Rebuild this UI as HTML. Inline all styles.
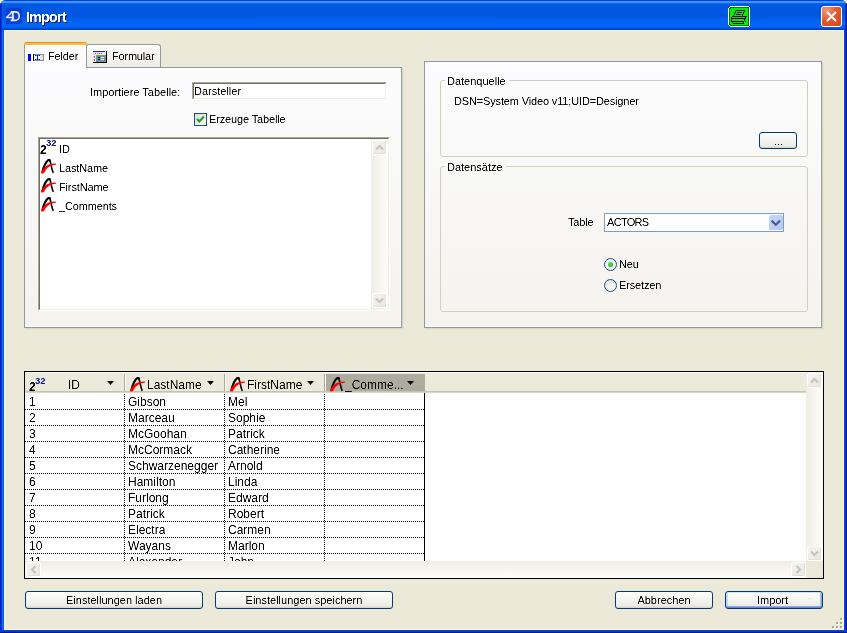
<!DOCTYPE html>
<html><head><meta charset="utf-8">
<style>
*{margin:0;padding:0;box-sizing:border-box}
html,body{width:847px;height:633px;overflow:hidden;background:#efebd6}
body{position:relative;font-family:"Liberation Sans",sans-serif;font-size:11px;color:#000}
.a{position:absolute}
.cr{filter:url(#crisp)}
.t{filter:url(#crisp);position:absolute;white-space:nowrap;line-height:13px;font-size:11px;letter-spacing:-0.15px}
#win{position:absolute;left:0;top:0;width:847px;height:633px;border-radius:6px 6px 0 0;overflow:hidden;background:#0058e6}
#title{position:absolute;left:0;top:0;width:847px;height:30px;
 background:linear-gradient(to bottom,#0a3cd8 0px,#0a3cd8 1px,#3d95ff 1px,#3d95ff 3px,#0a6cf2 3px,#0060ea 4px,#0058e2 5px,#0055e0 16px,#005ee8 18px,#0064f2 21px,#0066f6 27px,#0056dc 28px,#0048d0 29px,#0038c0 30px)}
#client{position:absolute;left:4px;top:30px;width:840px;height:600px;background:#ece9d8;border-left:1px solid #fcf6da;border-top:1px solid #fcf6da;border-right:1px solid #fcf6da;border-bottom:1px solid #fcf6da}
.pane{position:absolute;border:1px solid #919b9c;background:linear-gradient(to bottom,#fcfcfe,#f4f3ee);box-shadow:inset -1px -1px 0 #fff,1px 1px 0 #dcd8c6,2px 2px 0 #e5e2d0}
.grp{position:absolute;border:1px solid #d0d0bf;border-radius:3px}
.glbl{position:absolute;white-space:nowrap;line-height:13px;padding:0 3px 0 2px;letter-spacing:0}
.btn{position:absolute;border:1px solid #003c74;border-radius:3px;background:linear-gradient(to bottom,#ffffff 0%,#f6f6f3 40%,#ecebe6 85%,#d6d0c5 100%);text-align:center;line-height:16px;letter-spacing:0px}
.sb{position:absolute;background:#f3f2ec}
.sbb{position:absolute;width:15px;height:15px;border:1px solid #fff;border-radius:2px;background:linear-gradient(135deg,#f4f3ee,#e8e7df);box-shadow:inset -1px -1px 0 #e2e1d8}
.g{filter:url(#crisp);position:absolute;white-space:nowrap;font-size:12px;line-height:16px}
.hd{position:absolute;left:25px;width:400px;height:1px;background-image:linear-gradient(to right,#000 50%,transparent 50%);background-size:2px 1px}
.vd{position:absolute;top:394px;width:1px;height:167px;background-image:linear-gradient(to bottom,#000 50%,transparent 50%);background-size:1px 2px}
</style></head><body>
<svg width="0" height="0" style="position:absolute"><filter id="crisp" x="0" y="0" width="100%" height="100%"><feComponentTransfer><feFuncA type="linear" slope="1.7" intercept="-0.35"/></feComponentTransfer></filter></svg>
<div id="win">
 <div id="title"></div>
 <!-- frame -->
 <div class="a" style="left:0;top:3px;width:1px;height:630px;background:#0019cf"></div>
 <div class="a" style="left:1px;top:3px;width:1px;height:630px;background:#0040d8"></div>
 <div class="a" style="left:2px;top:30px;width:1px;height:603px;background:#166aee"></div>
 <div class="a" style="left:3px;top:30px;width:1px;height:603px;background:#0058e0"></div>
 <div class="a" style="left:844px;top:30px;width:1px;height:603px;background:#0044ec"></div>
 <div class="a" style="left:845px;top:4px;width:1px;height:629px;background:#0036d0"></div>
 <div class="a" style="left:846px;top:3px;width:1px;height:630px;background:#001a90"></div>
 <div class="a" style="left:0;top:630px;width:847px;height:1px;background:#0044ec"></div>
 <div class="a" style="left:0;top:631px;width:847px;height:1px;background:#0036d0"></div>
 <div class="a" style="left:0;top:632px;width:847px;height:1px;background:#001a90"></div>
 <div id="client"></div>
 <!-- title content -->
 <div class="a" style="left:6px;top:8px;width:16px;height:16px;background:#0a3fd6"></div>
 <svg class="a" style="left:6px;top:8px" width="16" height="16" viewBox="0 0 16 16">
  <path d="M0.6 9.6 L6.4 3.6" stroke="#e6ebfb" stroke-width="1.4" fill="none"/>
  <path d="M0.2 9.4 L8 9.4" stroke="#e6ebfb" stroke-width="1.5" fill="none"/>
  <path d="M6.8 3.5 L6.8 12.6" stroke="#e6ebfb" stroke-width="1.9" fill="none"/>
  <path d="M4.8 3.9 L9 3.9 C14.6 3.9 14.6 12.4 9 12.4 L4.6 12.4" stroke="#e6ebfb" stroke-width="1.6" fill="none"/>
 </svg>
 <div class="a" style="left:27px;top:10px;font-weight:bold;font-size:14px;line-height:16px;letter-spacing:-0.6px;color:#0a1a60;white-space:nowrap;filter:url(#crisp)">Import</div>
 <div class="a" style="left:26px;top:9px;font-weight:bold;font-size:14px;line-height:16px;letter-spacing:-0.6px;color:#fff;white-space:nowrap;filter:url(#crisp)">Import</div>
 <!-- printer button -->
 <svg class="a" style="left:728px;top:6px" width="22" height="21" viewBox="0 0 22 21" shape-rendering="crispEdges">
  <path d="M2 0 H20 L22 2 V19 L20 21 H2 L0 19 V2 Z" fill="#fff"/>
  <path d="M2 1 H20 L21 2 V19 L20 20 H2 L1 19 V2 Z" fill="#0a7a0a"/>
  <path d="M3 2 H19 L20 3 V18 L19 19 H3 L2 18 V3 Z" fill="#00f000"/>
  <g fill="#000"><rect x="8" y="4" width="9" height="1"/><rect x="7" y="5" width="1" height="1"/><rect x="16" y="5" width="1" height="1"/><rect x="7" y="6" width="1" height="1"/><rect x="9" y="6" width="5" height="1"/><rect x="15" y="6" width="1" height="1"/><rect x="6" y="7" width="1" height="1"/><rect x="15" y="7" width="1" height="1"/><rect x="6" y="8" width="1" height="1"/><rect x="8" y="8" width="5" height="1"/><rect x="14" y="8" width="1" height="1"/><rect x="5" y="9" width="1" height="1"/><rect x="14" y="9" width="1" height="1"/><rect x="4" y="10" width="15" height="1"/><rect x="3" y="11" width="1" height="1"/><rect x="17" y="11" width="1" height="1"/><rect x="3" y="12" width="14" height="1"/><rect x="17" y="12" width="1" height="1"/><rect x="3" y="13" width="1" height="1"/><rect x="16" y="13" width="1" height="1"/><rect x="3" y="14" width="1" height="1"/><rect x="16" y="14" width="1" height="1"/><rect x="3" y="15" width="13" height="1"/><rect x="17" y="15" width="1" height="1"/><rect x="4" y="16" width="1" height="1"/><rect x="15" y="16" width="1" height="1"/><rect x="5" y="17" width="11" height="1"/></g>
 </svg>
 <!-- close button -->
 <div class="a" style="left:821px;top:6px;width:21px;height:21px;border:1px solid #fff;border-radius:3px;background:radial-gradient(circle at 25% 20%,#f39a7e 0%,#e45a32 45%,#d4401a 100%)"></div>
 <svg class="a" style="left:821px;top:6px" width="21" height="21" viewBox="0 0 21 21">
  <path d="M6 6 L15 15 M15 6 L6 15" stroke="#fff" stroke-width="1.9" fill="none"/>
 </svg>

 <!-- ================= TABS ================= -->
 <div class="pane" style="left:24px;top:67px;width:378px;height:261px"></div>
 <!-- formular tab -->
 <div class="a" style="left:86px;top:44px;width:75px;height:23px;border:1px solid #919b9c;border-bottom:none;border-radius:3px 3px 0 0;background:linear-gradient(to bottom,#fefefe,#f4f3ee 60%,#ecebe6)"></div>
 <!-- felder tab (selected) -->
 <div class="a" style="left:24px;top:42px;width:63px;height:26px;border-left:1px solid #919b9c;border-right:1px solid #919b9c;border-radius:3px 3px 0 0;background:#fcfcfe"></div>
 <div class="a" style="left:24px;top:42px;width:63px;height:3px;background:linear-gradient(to bottom,#e68b2c 0,#e68b2c 1px,#ffc73c 1px,#f9b53a 3px);border-radius:3px 3px 0 0"></div>
 <!-- felder icon -->
 <div class="a" style="left:28px;top:54px;width:3px;height:7px;background:#0000ff"></div>
 <svg class="a" style="left:33px;top:54px" width="11" height="7" viewBox="0 0 11 7" shape-rendering="crispEdges">
  <rect x="0" y="0" width="11" height="7" fill="#8a8a8a"/>
  <rect x="1" y="1" width="9" height="5" fill="#e6e6e6"/>
  <rect x="1" y="1" width="6" height="5" fill="#fffff0"/>
  <rect x="0" y="0" width="1" height="7" fill="#000"/>
  <rect x="2" y="1" width="5" height="1" fill="#0010ff"/>
  <rect x="2" y="5" width="5" height="1" fill="#0010ff"/>
  <rect x="4" y="1" width="1" height="5" fill="#0010ff"/>
  <rect x="3" y="1" width="1" height="1" fill="#40a0ff"/><rect x="5" y="1" width="1" height="1" fill="#40a0ff"/>
  <rect x="3" y="5" width="1" height="1" fill="#40a0ff"/><rect x="5" y="5" width="1" height="1" fill="#40a0ff"/>
 </svg>
 <div class="t" style="left:48px;top:50px">Felder</div>
 <!-- formular icon -->
 <svg class="a" style="left:93px;top:51px" width="14" height="12" viewBox="0 0 14 12" shape-rendering="crispEdges">
  <rect x="0" y="0" width="13" height="11" fill="#e4e4fa"/>
  <rect x="0" y="0" width="12" height="1" fill="#1a1ae0"/>
  <rect x="13" y="0" width="1" height="12" fill="#000"/>
  <rect x="0" y="11" width="14" height="1" fill="#000"/>
  <rect x="2" y="2" width="1" height="1" fill="#707070"/><rect x="4" y="2" width="1" height="1" fill="#707070"/><rect x="6" y="2" width="1" height="1" fill="#707070"/><rect x="8" y="2" width="1" height="1" fill="#707070"/>
  <rect x="3" y="4" width="10" height="7" fill="#8c8c8c"/>
  <rect x="4" y="5" width="8" height="5" fill="#5c9c98"/>
  <rect x="5" y="6" width="2" height="1" fill="#000"/><rect x="5" y="8" width="2" height="1" fill="#000"/>
  <rect x="8" y="6" width="3" height="1" fill="#fff"/><rect x="8" y="8" width="3" height="1" fill="#fff"/>
  <rect x="1" y="5" width="1" height="2" fill="#e03060"/>
  <rect x="1" y="8" width="1" height="2" fill="#b07800"/>
 </svg>
 <div class="t" style="left:112px;top:50px;letter-spacing:-0.2px">Formular</div>

 <!-- left pane content -->
 <div class="t" style="left:90px;top:86px;letter-spacing:0">Importiere Tabelle:</div>
 <div class="a" style="left:192px;top:82px;width:194px;height:17px;background:#fff;border-top:2px solid #716f64;border-left:2px solid #716f64;border-right:1px solid #f1efe2;border-bottom:1px solid #f1efe2;box-shadow:-0px 0 0 #aca899"></div>
 <div class="a" style="left:192px;top:82px;width:193px;height:1px;background:#aca899"></div>
 <div class="a" style="left:192px;top:82px;width:1px;height:16px;background:#aca899"></div>
 <div class="t" style="left:194px;top:85px;letter-spacing:0">Darsteller</div>
 <!-- checkbox -->
 <div class="a" style="left:194px;top:113px;width:13px;height:13px;border:1px solid #1c5180;background:linear-gradient(135deg,#dcdcd7,#ffffff)"></div>
 <svg class="a" style="left:194px;top:113px" width="13" height="13" viewBox="0 0 13 13">
  <path d="M3 6 L5.3 8.5 L10 3.5" stroke="#21a121" stroke-width="2.2" fill="none"/>
 </svg>
 <div class="t" style="left:209px;top:113px">Erzeuge Tabelle</div>

 <!-- listbox -->
 <div class="a" style="left:38px;top:137px;width:352px;height:174px;background:#fff;border-top:1px solid #aca899;border-left:1px solid #aca899;border-right:1px solid #fff;border-bottom:1px solid #fff"></div>
 <div class="a" style="left:39px;top:138px;width:350px;height:172px;border-top:1px solid #716f64;border-left:1px solid #716f64;border-right:1px solid #f1efe2;border-bottom:1px solid #f1efe2"></div>
 <div class="sb" style="left:371px;top:139px;width:17px;height:170px;background:linear-gradient(to right,#eeede5,#fdfdf9)"></div>

 <!-- listbox rows -->
 <svg width="0" height="0" style="position:absolute"><defs>
  <symbol id="aic" viewBox="0 0 15 15">
   <path d="M1.2 13.8 C2.2 9.5 4.2 3.5 7.2 1.2 C8.2 0.5 8.8 1 9.2 2" stroke="#000" stroke-width="2.1" fill="none"/>
   <path d="M8.9 1.6 C10 4.5 10.6 10.5 12.3 13.8" stroke="#000" stroke-width="1.6" fill="none"/>
   <path d="M0 13.6 C1.5 10 4.5 6.5 8.5 5.3 C10.5 4.7 12.5 4.5 14.9 4.5 L14.9 5.8 C12.5 6 10.5 6.5 9 7.2 C6 8.8 4 11.5 3 14.3 L0.2 14.5 Z" fill="#ff0000"/>
  </symbol>
  <symbol id="chu" viewBox="0 0 15 15"><path d="M4 9.5 L7.5 6 L11 9.5" stroke="#c3c3b9" stroke-width="2" fill="none"/></symbol>
  <symbol id="chd" viewBox="0 0 15 15"><path d="M4 5.5 L7.5 9 L11 5.5" stroke="#c3c3b9" stroke-width="2" fill="none"/></symbol>
  <symbol id="chl" viewBox="0 0 15 15"><path d="M9.5 4 L6 7.5 L9.5 11" stroke="#c3c3b9" stroke-width="2" fill="none"/></symbol>
  <symbol id="chr" viewBox="0 0 15 15"><path d="M5.5 4 L9 7.5 L5.5 11" stroke="#c3c3b9" stroke-width="2" fill="none"/></symbol>
 </defs></svg>
 <div class="a" style="left:40px;top:144px;font-weight:bold;font-size:12px;line-height:12px;filter:url(#crisp)">2</div>
 <div class="a" style="left:46px;top:138px;font-weight:bold;font-size:9.5px;line-height:9px;color:#1e1ea0;filter:url(#crisp)">32</div>
 <div class="t" style="left:59px;top:143px">ID</div>
 <svg class="a" style="left:41px;top:159px" width="15" height="15"><use href="#aic"/></svg>
 <div class="t" style="left:59px;top:162px">LastName</div>
 <svg class="a" style="left:41px;top:178px" width="15" height="15"><use href="#aic"/></svg>
 <div class="t" style="left:59px;top:181px">FirstName</div>
 <svg class="a" style="left:41px;top:197px" width="15" height="15"><use href="#aic"/></svg>
 <div class="t" style="left:59px;top:200px">_Comments</div>
 <div class="sbb" style="left:372px;top:140px"></div>
 <svg class="a" style="left:372px;top:140px" width="15" height="15"><use href="#chu"/></svg>
 <div class="sbb" style="left:372px;top:293px"></div>
 <svg class="a" style="left:372px;top:293px" width="15" height="15"><use href="#chd"/></svg>

 <!-- ================= RIGHT PANE ================= -->
 <div class="pane" style="left:424px;top:61px;width:398px;height:267px"></div>
 <div class="grp" style="left:440px;top:80px;width:368px;height:77px"></div>
 <div class="glbl" style="left:445px;top:75px;background:#fbfbfc"><span class="cr">Datenquelle</span></div>
 <div class="t" style="left:454px;top:95px">DSN=System Video v11;UID=Designer</div>
 <div class="btn" style="left:759px;top:132px;width:38px;height:17px"></div>
 <div class="a" style="left:775px;top:144px;width:1px;height:1px;background:#000;box-shadow:3px 0 0 #000,6px 0 0 #000"></div>
 <div class="grp" style="left:440px;top:166px;width:368px;height:146px"></div>
 <div class="glbl" style="left:445px;top:161px;background:#f8f8f6"><span class="cr">Datens&auml;tze</span></div>
 <div class="t" style="left:568px;top:216px">Table</div>
 <div class="a" style="left:604px;top:213px;width:180px;height:19px;border:1px solid #7f9db9;background:#fff"></div>
 <div class="t" style="left:607px;top:216px;letter-spacing:-0.7px">ACTORS</div>
 <div class="a" style="left:769px;top:215px;width:14px;height:15px;border-radius:2px;background:linear-gradient(135deg,#c6d6fc,#b3c8f5)"></div>
 <svg class="a" style="left:769px;top:215px" width="14" height="15" viewBox="0 0 14 15"><path d="M2.6 5.6 L6.8 9.8 L11 5.6" stroke="#4d6185" stroke-width="2.2" fill="none"/></svg>
 <!-- radios -->
 <div class="a" style="left:604px;top:258px;width:13px;height:13px;border-radius:50%;border:1px solid #1c5180;background:radial-gradient(circle at 40% 40%,#fff,#e6e6df)"></div>
 <div class="a" style="left:608px;top:262px;width:5px;height:5px;border-radius:50%;background:radial-gradient(circle at 40% 40%,#66dd66,#18a018)"></div>
 <div class="t" style="left:619px;top:258px">Neu</div>
 <div class="a" style="left:604px;top:279px;width:13px;height:13px;border-radius:50%;border:1px solid #1c5180;background:radial-gradient(circle at 70% 70%,#fff,#dcdcd5)"></div>
 <div class="t" style="left:619px;top:279px">Ersetzen</div>

 <!-- ================= GRID ================= -->
 <div class="a" style="left:24px;top:371px;width:800px;height:208px;border:1px solid #000;background:#fff"></div>
 <div class="a" style="left:25px;top:372px;width:798px;height:1px;background:#fff"></div>
 <div class="a" style="left:25px;top:373px;width:781px;height:18px;background:#ebeadb"></div>
 <div class="a" style="left:25px;top:391px;width:781px;height:1px;background:#c5c2b2"></div>
 <div class="a" style="left:25px;top:392px;width:781px;height:1px;background:#d8d5c8"></div>
 <div class="a" style="left:326px;top:374px;width:99px;height:17px;background:#aeac9e"></div>
 <div class="a" style="left:124px;top:374px;width:1px;height:17px;background:#aca899"></div>
 <div class="a" style="left:125px;top:374px;width:1px;height:17px;background:#fff"></div>
 <div class="a" style="left:224px;top:374px;width:1px;height:17px;background:#aca899"></div>
 <div class="a" style="left:225px;top:374px;width:1px;height:17px;background:#fff"></div>
 <div class="a" style="left:324px;top:374px;width:1px;height:17px;background:#aca899"></div>
 <div class="a" style="left:325px;top:374px;width:1px;height:17px;background:#fff"></div>
 <!-- header content -->
 <div class="a" style="left:29px;top:381px;font-weight:bold;font-size:12px;line-height:12px;filter:url(#crisp)">2</div>
 <div class="a" style="left:35px;top:376px;font-weight:bold;font-size:9.5px;line-height:9px;color:#1e1ea0;filter:url(#crisp)">32</div>
 <div class="g" style="left:68px;top:377px">ID</div>
 <svg class="a" style="left:130px;top:377px" width="15" height="15"><use href="#aic"/></svg>
 <div class="g" style="left:147px;top:377px">LastName</div>
 <svg class="a" style="left:230px;top:377px" width="15" height="15"><use href="#aic"/></svg>
 <div class="g" style="left:247px;top:377px">FirstName</div>
 <svg class="a" style="left:330px;top:377px" width="15" height="15"><use href="#aic"/></svg>
 <div class="g" style="left:345px;top:377px">_Comme...</div>
 <svg class="a" style="left:107px;top:381px" width="7" height="4"><path d="M0 0 H7 L3.5 4 Z" fill="#000"/></svg>
 <svg class="a" style="left:207px;top:381px" width="7" height="4"><path d="M0 0 H7 L3.5 4 Z" fill="#000"/></svg>
 <svg class="a" style="left:307px;top:381px" width="7" height="4"><path d="M0 0 H7 L3.5 4 Z" fill="#000"/></svg>
 <svg class="a" style="left:407px;top:381px" width="7" height="4"><path d="M0 0 H7 L3.5 4 Z" fill="#000"/></svg>
 <!-- rows -->
 <div class="a" style="left:25px;top:393px;width:781px;height:168px;overflow:hidden">
  <div style="position:absolute;left:-25px;top:-393px;width:847px;height:633px">
<div class="g" style="left:29px;top:394px">1</div><div class="g" style="left:128px;top:394px">Gibson</div><div class="g" style="left:228px;top:394px">Mel</div>
<div class="hd" style="top:409px"></div>
<div class="g" style="left:29px;top:410px">2</div><div class="g" style="left:128px;top:410px">Marceau</div><div class="g" style="left:228px;top:410px">Sophie</div>
<div class="hd" style="top:425px"></div>
<div class="g" style="left:29px;top:426px">3</div><div class="g" style="left:128px;top:426px">McGoohan</div><div class="g" style="left:228px;top:426px">Patrick</div>
<div class="hd" style="top:441px"></div>
<div class="g" style="left:29px;top:442px">4</div><div class="g" style="left:128px;top:442px">McCormack</div><div class="g" style="left:228px;top:442px">Catherine</div>
<div class="hd" style="top:457px"></div>
<div class="g" style="left:29px;top:458px">5</div><div class="g" style="left:128px;top:458px">Schwarzenegger</div><div class="g" style="left:228px;top:458px">Arnold</div>
<div class="hd" style="top:473px"></div>
<div class="g" style="left:29px;top:474px">6</div><div class="g" style="left:128px;top:474px">Hamilton</div><div class="g" style="left:228px;top:474px">Linda</div>
<div class="hd" style="top:489px"></div>
<div class="g" style="left:29px;top:490px">7</div><div class="g" style="left:128px;top:490px">Furlong</div><div class="g" style="left:228px;top:490px">Edward</div>
<div class="hd" style="top:505px"></div>
<div class="g" style="left:29px;top:506px">8</div><div class="g" style="left:128px;top:506px">Patrick</div><div class="g" style="left:228px;top:506px">Robert</div>
<div class="hd" style="top:521px"></div>
<div class="g" style="left:29px;top:522px">9</div><div class="g" style="left:128px;top:522px">Electra</div><div class="g" style="left:228px;top:522px">Carmen</div>
<div class="hd" style="top:537px"></div>
<div class="g" style="left:29px;top:538px">10</div><div class="g" style="left:128px;top:538px">Wayans</div><div class="g" style="left:228px;top:538px">Marlon</div>
<div class="hd" style="top:553px"></div>
<div class="g" style="left:29px;top:554px">11</div><div class="g" style="left:128px;top:554px">Alexander</div><div class="g" style="left:228px;top:554px">John</div>
  <div class="vd" style="left:124px"></div>
  <div class="vd" style="left:224px"></div>
  <div class="vd" style="left:324px"></div>
  <div class="a" style="left:424px;top:393px;width:1px;height:168px;background:#000"></div>
  </div>
 </div>
 <!-- grid scrollbars -->
 <div class="sb" style="left:806px;top:372px;width:17px;height:189px;background:linear-gradient(to right,#eeede5,#fefefa)"></div>
 <div class="sbb" style="left:807px;top:373px"></div>
 <svg class="a" style="left:807px;top:373px" width="15" height="15"><use href="#chu"/></svg>
 <div class="sbb" style="left:807px;top:546px"></div>
 <svg class="a" style="left:807px;top:546px" width="15" height="15"><use href="#chd"/></svg>
 <div class="sb" style="left:25px;top:561px;width:781px;height:17px;background:linear-gradient(to bottom,#eeede5,#fefefa)"></div>
 <div class="sbb" style="left:26px;top:562px"></div>
 <svg class="a" style="left:26px;top:562px" width="15" height="15"><use href="#chl"/></svg>
 <div class="sbb" style="left:791px;top:562px"></div>
 <svg class="a" style="left:791px;top:562px" width="15" height="15"><use href="#chr"/></svg>
 <div class="a" style="left:806px;top:561px;width:17px;height:17px;background:#ece9d8"></div>

 <!-- ================= BUTTONS ================= -->
 <div class="btn" style="left:25px;top:591px;width:178px;height:18px"><span class="cr">Einstellungen laden</span></div>
 <div class="btn" style="left:215px;top:591px;width:178px;height:18px"><span class="cr">Einstellungen speichern</span></div>
 <div class="btn" style="left:615px;top:591px;width:98px;height:18px"><span class="cr">Abbrechen</span></div>
 <div class="btn" style="left:725px;top:591px;width:98px;height:18px;padding-right:3px;box-shadow:inset 0 1px 0 #cee7ff,inset 0 -1px 0 #6982ee,inset 1px 0 0 #bcd4f6,inset -1px 0 0 #89ade4,inset 0 -2px 0 #89ade4,inset 2px 0 0 #c8dcf8,inset -2px 0 0 #a0bcec"><span class="cr">Import</span></div>
 <div class="a" style="left:808px;top:598px;width:1px;height:1px;background:#eeee50;box-shadow:2px 0 0 #eeee50"></div>
 <div class="a" style="left:206px;top:594px;width:1px;height:1px;background:#e8e060"></div>
 <!-- grip -->
 <svg class="a" style="left:832px;top:617px" width="12" height="12" viewBox="0 0 12 12">
  <g fill="#fff"><rect x="9" y="2" width="2" height="2"/><rect x="5" y="6" width="2" height="2"/><rect x="9" y="6" width="2" height="2"/><rect x="1" y="10" width="2" height="2"/><rect x="5" y="10" width="2" height="2"/><rect x="9" y="10" width="2" height="2"/></g>
  <g fill="#aca899"><rect x="8" y="1" width="2" height="2"/><rect x="4" y="5" width="2" height="2"/><rect x="8" y="5" width="2" height="2"/><rect x="0" y="9" width="2" height="2"/><rect x="4" y="9" width="2" height="2"/><rect x="8" y="9" width="2" height="2"/></g>
 </svg>
</div>
</body></html>
